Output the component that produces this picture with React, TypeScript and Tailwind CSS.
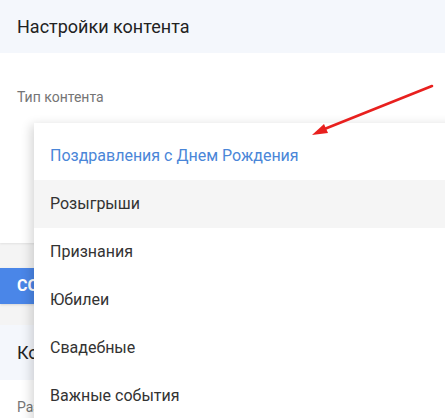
import React from "react";

const options = [
  "Поздравления с Днем Рождения",
  "Розыгрыши",
  "Признания",
  "Юбилеи",
  "Свадебные",
  "Важные события",
];

export default function App() {
  return (
    <div className="relative w-[445px] h-[418px] overflow-hidden bg-[#f4f4f4] font-['Roboto',sans-serif]">
      {/* content settings card */}
      <div className="shadow-[0_1px_2px_rgba(0,0,0,0.08)]">
        <div className="h-[53px] bg-[#f4f7fc] px-[17px] flex items-center text-[18px] text-[#222]">
          Настройки контента
        </div>
        <div className="h-[190px] bg-white px-[17px] pt-[34px]">
          <div className="text-[14px] text-[#757575]">Тип контента</div>
        </div>
      </div>

      <div className="h-[25px]" />
      <div className="h-[36px] w-[200px] bg-[#4a86e8] rounded-r-sm pl-[17px] flex items-center shadow-sm">
        <span className="w-[17px] overflow-hidden whitespace-nowrap text-white font-bold text-[16px] uppercase">
          Сохранить
        </span>
      </div>
      <div className="h-[21px]" />

      {/* second card, mostly hidden under the menu */}
      <div>
        <div className="h-[55px] bg-[#f4f7fc] pl-[17px] flex items-center">
          <span className="w-[17px] overflow-hidden whitespace-nowrap text-[18px] text-[#222]">Комментарии</span>
        </div>
        <div className="h-[60px] bg-white pl-[17px] pt-[17px]">
          <div className="w-[17px] overflow-hidden whitespace-nowrap text-[14px] text-[#757575]">Разрешить</div>
        </div>
      </div>

      {/* open select menu */}
      <div className="absolute left-[34px] top-[123px] -right-[20px] bottom-[-20px] bg-white pt-[9px] shadow-[-3px_2px_10px_rgba(0,0,0,0.16)]">
        {options.map((o, i) => (
          <div
            key={o}
            className={
              "h-12 flex items-center px-4 text-[16px] " +
              (i === 0
                ? "text-[#4a86d8]"
                : i === 1
                ? "bg-[#f5f5f5] text-[#333]"
                : "text-[#333]")
            }
          >
            {o}
          </div>
        ))}
      </div>

      {/* annotation arrow */}
      <svg className="absolute left-0 top-0" width="445" height="418" viewBox="0 0 445 418">
        <line x1="432" y1="86" x2="322" y2="130" stroke="#e8201e" strokeWidth="2.6" strokeLinecap="round" />
        <polygon points="312,135 324,124 328,133" fill="#e8201e" />
      </svg>
    </div>
  );
}
